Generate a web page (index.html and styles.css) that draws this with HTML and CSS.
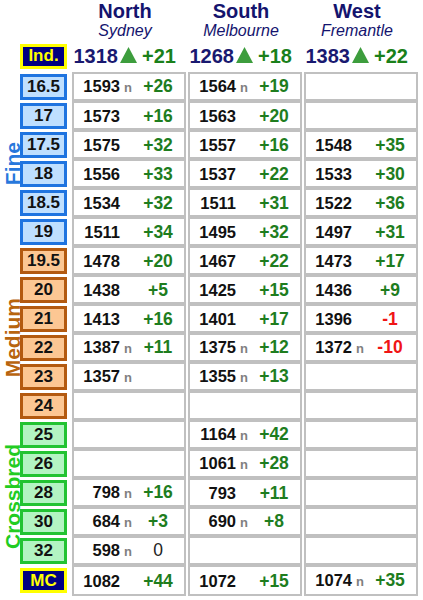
FILE: index.html
```html
<!DOCTYPE html>
<html>
<head>
<meta charset="utf-8">
<link rel="stylesheet" href="styles.css">
</head>
<body>
<div class="board">
  <div class="hdr c3"><div class="name">North</div><div class="city">Sydney</div></div>
  <div class="hdr c4"><div class="name">South</div><div class="city">Melbourne</div></div>
  <div class="hdr c5"><div class="name">West</div><div class="city">Fremantle</div></div>

  <div class="lab y">Ind.</div>
  <div class="idx c3"><span class="num">1318</span><span class="tri"><svg viewBox="0 0 17 16" width="17" height="16"><polygon points="8.5,0 17,16 0,16" fill="#3d9d3d"/></svg></span><span class="chg">+21</span></div>
  <div class="idx c4"><span class="num">1268</span><span class="tri"><svg viewBox="0 0 17 16" width="17" height="16"><polygon points="8.5,0 17,16 0,16" fill="#3d9d3d"/></svg></span><span class="chg">+18</span></div>
  <div class="idx c5"><span class="num">1383</span><span class="tri"><svg viewBox="0 0 17 16" width="17" height="16"><polygon points="8.5,0 17,16 0,16" fill="#3d9d3d"/></svg></span><span class="chg">+22</span></div>

  <div class="grp fine"><span>Fine</span></div>
  <div class="grp medium"><span>Medium</span></div>
  <div class="grp cross"><span>Crossbred</span></div>

  <div class="lab f">16.5</div>
  <div class="cell c3"><span class="num">1593</span><span class="n">n</span><span class="chg">+26</span></div>
  <div class="cell c4"><span class="num">1564</span><span class="n">n</span><span class="chg">+19</span></div>
  <div class="cell c5"></div>

  <div class="lab f">17</div>
  <div class="cell c3"><span class="num">1573</span><span class="chg">+16</span></div>
  <div class="cell c4"><span class="num">1563</span><span class="chg">+20</span></div>
  <div class="cell c5"></div>

  <div class="lab f">17.5</div>
  <div class="cell c3"><span class="num">1575</span><span class="chg">+32</span></div>
  <div class="cell c4"><span class="num">1557</span><span class="chg">+16</span></div>
  <div class="cell c5"><span class="num">1548</span><span class="chg">+35</span></div>

  <div class="lab f">18</div>
  <div class="cell c3"><span class="num">1556</span><span class="chg">+33</span></div>
  <div class="cell c4"><span class="num">1537</span><span class="chg">+22</span></div>
  <div class="cell c5"><span class="num">1533</span><span class="chg">+30</span></div>

  <div class="lab f">18.5</div>
  <div class="cell c3"><span class="num">1534</span><span class="chg">+32</span></div>
  <div class="cell c4"><span class="num">1511</span><span class="chg">+31</span></div>
  <div class="cell c5"><span class="num">1522</span><span class="chg">+36</span></div>

  <div class="lab f">19</div>
  <div class="cell c3"><span class="num">1511</span><span class="chg">+34</span></div>
  <div class="cell c4"><span class="num">1495</span><span class="chg">+32</span></div>
  <div class="cell c5"><span class="num">1497</span><span class="chg">+31</span></div>

  <div class="lab m">19.5</div>
  <div class="cell c3"><span class="num">1478</span><span class="chg">+20</span></div>
  <div class="cell c4"><span class="num">1467</span><span class="chg">+22</span></div>
  <div class="cell c5"><span class="num">1473</span><span class="chg">+17</span></div>

  <div class="lab m">20</div>
  <div class="cell c3"><span class="num">1438</span><span class="chg">+5</span></div>
  <div class="cell c4"><span class="num">1425</span><span class="chg">+15</span></div>
  <div class="cell c5"><span class="num">1436</span><span class="chg">+9</span></div>

  <div class="lab m">21</div>
  <div class="cell c3"><span class="num">1413</span><span class="chg">+16</span></div>
  <div class="cell c4"><span class="num">1401</span><span class="chg">+17</span></div>
  <div class="cell c5"><span class="num">1396</span><span class="chg neg">-1</span></div>

  <div class="lab m">22</div>
  <div class="cell c3"><span class="num">1387</span><span class="n">n</span><span class="chg">+11</span></div>
  <div class="cell c4"><span class="num">1375</span><span class="n">n</span><span class="chg">+12</span></div>
  <div class="cell c5"><span class="num">1372</span><span class="n">n</span><span class="chg neg">-10</span></div>

  <div class="lab m">23</div>
  <div class="cell c3"><span class="num">1357</span><span class="n">n</span></div>
  <div class="cell c4"><span class="num">1355</span><span class="n">n</span><span class="chg">+13</span></div>
  <div class="cell c5"></div>

  <div class="lab m">24</div>
  <div class="cell c3"></div>
  <div class="cell c4"></div>
  <div class="cell c5"></div>

  <div class="lab c">25</div>
  <div class="cell c3"></div>
  <div class="cell c4"><span class="num">1164</span><span class="n">n</span><span class="chg">+42</span></div>
  <div class="cell c5"></div>

  <div class="lab c">26</div>
  <div class="cell c3"></div>
  <div class="cell c4"><span class="num">1061</span><span class="n">n</span><span class="chg">+28</span></div>
  <div class="cell c5"></div>

  <div class="lab c">28</div>
  <div class="cell c3"><span class="num">798</span><span class="n">n</span><span class="chg">+16</span></div>
  <div class="cell c4"><span class="num">793</span><span class="chg">+11</span></div>
  <div class="cell c5"></div>

  <div class="lab c">30</div>
  <div class="cell c3"><span class="num">684</span><span class="n">n</span><span class="chg">+3</span></div>
  <div class="cell c4"><span class="num">690</span><span class="n">n</span><span class="chg">+8</span></div>
  <div class="cell c5"></div>

  <div class="lab c">32</div>
  <div class="cell c3"><span class="num">598</span><span class="n">n</span><span class="chg zero">0</span></div>
  <div class="cell c4"></div>
  <div class="cell c5"></div>

  <div class="lab y">MC</div>
  <div class="cell c3"><span class="num">1082</span><span class="chg">+44</span></div>
  <div class="cell c4"><span class="num">1072</span><span class="chg">+15</span></div>
  <div class="cell c5"><span class="num">1074</span><span class="n">n</span><span class="chg">+35</span></div>
</div>
</body>
</html>
```

FILE: styles.css
```css
body {
  margin: 0;
  background: #ffffff;
  font-family: "Liberation Sans", Arial, sans-serif;
}

.board {
  display: grid;
  grid-template-columns: 18px 50px 114px 114px 114px;
  grid-template-rows: 40px 32px repeat(17, 29px) 31px;
  column-gap: 2px;
}

.c3 { grid-column: 3; }
.c4 { grid-column: 4; }
.c5 { grid-column: 5; }

.hdr {
  text-align: center;
  padding: 1px 8px 0 0;
  color: #14146e;
}

.name {
  font-weight: bold;
  font-size: 20px;
  line-height: 21px;
}

.city {
  font-style: italic;
  font-size: 16px;
  line-height: 17px;
}

.lab {
  grid-column: 2;
  width: 47px;
  height: 26px;
  box-sizing: border-box;
  border: 3px solid;
  align-self: center;
  display: flex;
  align-items: center;
  justify-content: center;
  font-weight: bold;
  font-size: 17px;
  color: #111111;
}

.lab.f { border-color: #1f74e0; background: #bfdfff; }
.lab.m { border-color: #b35a10; background: #fcc793; }
.lab.c { border-color: #22c332; background: #b3f4c2; }
.lab.y {
  border-color: #ffff00;
  background: #000080;
  color: #ffff00;
  font-size: 17px;
  height: 25px;
}

.grp {
  grid-column: 1;
  display: flex;
  align-items: center;
  justify-content: flex-start;
}

.grp span {
  writing-mode: vertical-rl;
  transform: rotate(180deg);
  font-weight: bold;
  font-size: 21px;
  line-height: 21px;
  margin-left: 2px;
  margin-top: 9px;
}

.fine { grid-row: 3 / 9; color: #2878dc; }
.medium { grid-row: 9 / 15; color: #b8640f; }
.cross { grid-row: 15 / 20; color: #22cc22; }

.cell {
  border: 2px solid #c0c0c0;
  display: grid;
  grid-template-columns: 46px 18px 40px;
  align-content: center;
  align-items: baseline;
  line-height: 20px;
}

.idx {
  display: grid;
  grid-template-columns: 46px 20px 42px;
  align-content: center;
  align-items: baseline;
  line-height: 23px;
  padding-top: 2px;
}

.num {
  grid-column: 1;
  text-align: right;
  font-weight: bold;
  font-size: 16.5px;
  color: #111111;
}

.n {
  grid-column: 2;
  padding-left: 4px;
  font-weight: bold;
  font-size: 13px;
  color: #808080;
}

.tri {
  grid-column: 2;
  padding-left: 2px;
}

.tri svg {
  display: inline-block;
  vertical-align: baseline;
}

.chg {
  grid-column: 3;
  text-align: center;
  font-weight: bold;
  font-size: 17.5px;
  color: #1e7d1e;
}

.chg.neg { color: #f01515; }
.chg.zero { font-weight: normal; color: #222222; }

.idx .num { font-size: 20px; color: #191970; }
.idx .chg { font-size: 20px; color: #1a801a; }
```
